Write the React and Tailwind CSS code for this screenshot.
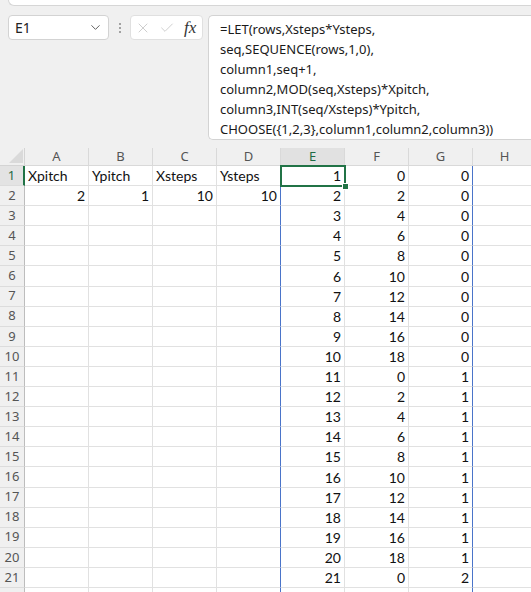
import { ChevronDown, X, Check } from "lucide-react";

const COLS = ["A", "B", "C", "D", "E", "F", "G", "H"];
const ROWS = Array.from({ length: 22 }, (_, i) => i + 1);
const LAST_FULL_ROW = 21;

const FORMULA = [
  "=LET(rows,Xsteps*Ysteps,",
  "seq,SEQUENCE(rows,1,0),",
  "column1,seq+1,",
  "column2,MOD(seq,Xsteps)*Xpitch,",
  "column3,INT(seq/Xsteps)*Ypitch,",
  "CHOOSE({1,2,3},column1,column2,column3))",
];

// value shown in a cell, plus whether it is text (left aligned)
function cellValue(row, col) {
  if (row > LAST_FULL_ROW) return null;
  if (row === 1 && col < 4) return { v: ["Xpitch", "Ypitch", "Xsteps", "Ysteps"][col], text: true };
  if (row === 2 && col < 4) return { v: [2, 1, 10, 10][col] };
  const n = row - 1;
  if (col === 4) return { v: row };
  if (col === 5) return { v: (n % 10) * 2 };
  if (col === 6) return { v: Math.floor(n / 10) };
  return null;
}

function Cell({ row, col }) {
  const c = cellValue(row, col);
  const spillLeft = col === 3 && row >= 2;
  const spillRight = col === 6;
  return (
    <div
      className={
        "h-[20.1px] border-b border-r border-b-[#e1e1e1] flex items-end pb-[1px] leading-[17px] px-[3px] text-[14px] text-[#111] " +
        (spillLeft || spillRight ? "border-r-[#4a74c9] " : "border-r-[#e1e1e1] ") +
        (c && c.text ? "justify-start" : "justify-end")
      }
      style={{ fontFamily: "Lato, 'Liberation Sans', sans-serif" }}
    >
      {c ? c.v : ""}
    </div>
  );
}

export default function App() {
  return (
    <div
      className="w-[531px] h-[592px] overflow-hidden bg-[#f0f0f0] text-[#222]"
      style={{ fontFamily: "'Noto Sans', 'Open Sans', sans-serif" }}
    >
      {/* ribbon edge */}
      <div className="ml-[8px] h-[6px] bg-white border-b border-l border-[#d6d6d6] rounded-bl-[6px]" />

      {/* formula bar */}
      <div className="flex items-start mt-[9px] pl-[8px]">
        <div className="w-[101px] h-[25px] bg-white border border-[#d3d3d3] rounded-[4px] flex items-center justify-between pl-[6px] pr-[5px]">
          <span className="text-[14px] text-[#222]">E1</span>
          <ChevronDown size={15} strokeWidth={1.5} className="text-[#555]" />
        </div>
        <div className="w-[21px] h-[25px] flex flex-col items-center justify-center gap-[2px]">
          <span className="w-[2px] h-[2px] bg-[#888] rounded-full" />
          <span className="w-[2px] h-[2px] bg-[#888] rounded-full" />
          <span className="w-[2px] h-[2px] bg-[#888] rounded-full" />
        </div>
        <div className="w-[73px] h-[25px] bg-white border border-[#e0e0e0] rounded-[4px] flex items-center pl-[4px] gap-[8px]">
          <X size={16} strokeWidth={1} className="text-[#b5b5b5]" />
          <Check size={16} strokeWidth={1} className="text-[#b5b5b5]" />
          <span
            className="text-[17px] italic text-[#333] leading-none ml-[1px]"
            style={{ fontFamily: "'Liberation Serif', 'DejaVu Serif', serif" }}
          >
            fx
          </span>
        </div>
        <div className="ml-[5px] flex-1 h-[125px] bg-white border border-[#d3d3d3] rounded-l-[5px] border-r-0 pl-[11px] pt-[3px]">
          {FORMULA.map((line) => (
            <div key={line} className="text-[13px] leading-[20px] whitespace-nowrap text-[#1a1a1a]">
              {line}
            </div>
          ))}
        </div>
      </div>

      {/* sheet */}
      <div className="relative mt-[8px]">
        <div className="grid grid-cols-[25px_repeat(8,64px)]">
          {/* corner */}
          <div className="h-[18px] border-b border-r border-[#d4d4d4] flex items-end justify-end pr-[1px] pb-[2px]">
            <svg width="14" height="14" viewBox="0 0 14 14">
              <polygon points="14,0 14,14 0,14" fill="#dadada" />
            </svg>
          </div>
          {COLS.map((c, i) => (
            <div
              key={c}
              className={
                "h-[18px] border-b border-r border-[#d9d9d9] flex items-center justify-center text-[13px] " +
                (i === 4 ? "bg-[#e1e1e1] text-[#1e6b45] border-b-[#217346]" : "text-[#555]")
              }
            >
              {c}
            </div>
          ))}

          {ROWS.map((r) => (
            <div key={r} className="contents">
              <div
                className={
                  "h-[20.1px] border-b border-b-[#dcdcdc] flex items-center justify-center text-[13px] " +
                  (r === 1
                    ? "bg-[#e3e3e3] border-r-2 border-r-[#217346] text-[#1e6b45]"
                    : "border-r border-r-[#bdbdbd] text-[#555]")
                }
              >
                {r <= LAST_FULL_ROW ? r : ""}
              </div>
              {COLS.map((_, ci) => (
                <div key={ci} className="bg-white">
                  <Cell row={r} col={ci} />
                </div>
              ))}
            </div>
          ))}
        </div>

        {/* active cell E1 */}
        <div className="absolute left-[280px] top-[17px] w-[66px] h-[22px] border-2 border-[#217346] pointer-events-none" />
        <div className="absolute left-[342px] top-[35px] w-[7px] h-[7px] bg-[#217346] border border-white pointer-events-none" />
      </div>
    </div>
  );
}
